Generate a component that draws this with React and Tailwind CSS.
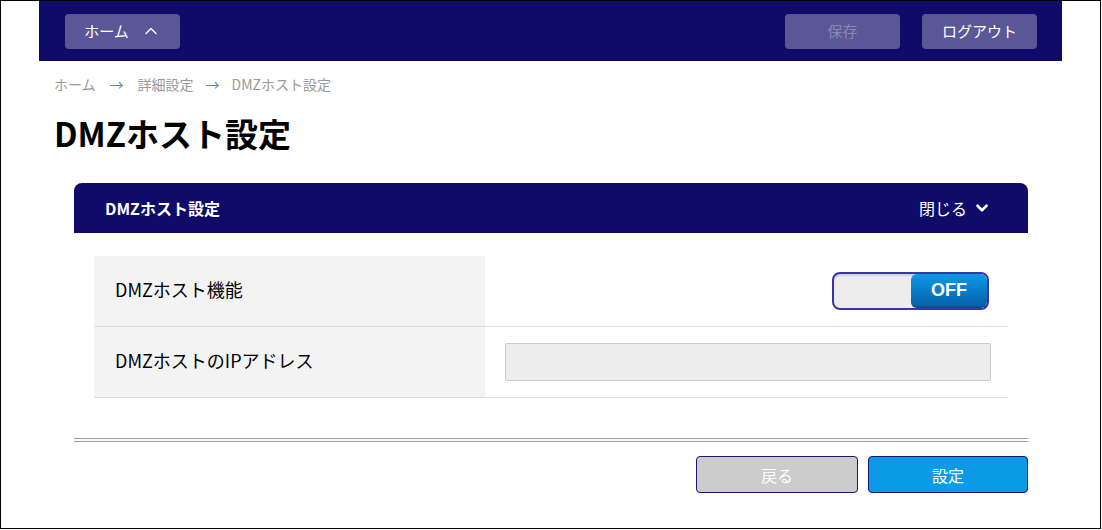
import { ChevronUp, ChevronDown } from 'lucide-react'

const FONT = { fontFamily: '"Noto Sans CJK JP", "Noto Sans", sans-serif' }

function Toggle() {
  return (
    <div className="mr-[2px] flex h-[38px] w-[157px] overflow-hidden rounded-[8px] border-2 border-[#3b35a3] bg-[#ededed] shadow-[inset_0_2px_2px_rgba(0,0,0,0.12)]">
      <div className="flex-1" />
      <div
        className="flex w-[76px] items-center justify-center rounded-[6px] border-b-2 border-[#0a4f8f] bg-gradient-to-b from-[#0a9be6] to-[#0760ac] text-[18px] font-bold text-white"
        style={{ fontFamily: '"Liberation Sans", Arial, sans-serif' }}
      >
        OFF
      </div>
    </div>
  )
}

export default function App() {
  return (
    <div className="h-[529px] w-[1101px] border border-black bg-white" style={FONT}>
      <div className="ml-[38px] w-[1023px]">
        <header className="flex h-[60px] items-center justify-between bg-[#0f0c69] pl-[26px] pr-[25px]">
          <button className="flex h-[35px] w-[115px] items-center justify-center gap-[12px] rounded-[4px] bg-[#5a5797] text-[15px] text-white">
            ホーム
            <ChevronUp size={20} strokeWidth={1.6} />
          </button>
          <div className="flex gap-[22px]">
            <button className="h-[35px] w-[115px] rounded-[4px] bg-[#5a5797] text-[15px] text-[#8a88b8]">
              保存
            </button>
            <button className="h-[35px] w-[115px] rounded-[4px] bg-[#5a5797] text-[15px] text-white">
              ログアウト
            </button>
          </div>
        </header>

        <nav className="mt-[13px] flex items-center pl-[15px] text-[14px] text-[#999]">
          <span>ホーム</span>
          <span className="mx-[14px] text-[#1a9be6]">→</span>
          <span>詳細設定</span>
          <span className="mx-[12px] text-[#1a9be6]">→</span>
          <span>DMZホスト設定</span>
        </nav>

        <h1 className="mt-[18px] pl-[15px] text-[33px] font-bold leading-[40px] text-black">
          DMZホスト設定
        </h1>

        <section className="ml-[35px] mr-[34px] mt-[30px]">
          <div className="flex h-[50px] items-center justify-between rounded-t-[8px] bg-[#0f0c69] pl-[31px] pr-[37px] text-white">
            <span className="text-[16px] font-bold">DMZホスト設定</span>
            <span className="flex items-center gap-[6px] text-[16px]">
              閉じる
              <ChevronDown size={18} strokeWidth={3.5} />
            </span>
          </div>

          <div className="mx-[20px] mt-[23px]">
            <div className="flex h-[71px] border-b border-[#ddd]">
              <div className="flex w-[391px] items-center bg-[#f3f3f3] pb-[4px] pl-[21px] text-[18px] text-black">
                DMZホスト機能
              </div>
              <div className="flex flex-1 items-center justify-end pr-[17px]">
                <Toggle />
              </div>
            </div>
            <div className="flex h-[71px] border-b border-[#ddd]">
              <div className="flex w-[391px] items-center bg-[#f3f3f3] pb-[4px] pl-[21px] text-[18px] text-black">
                DMZホストのIPアドレス
              </div>
              <div className="flex flex-1 items-center pl-[20px] pr-[17px]">
                <input
                  type="text"
                  disabled
                  className="h-[38px] w-full rounded-[2px] border border-[#ccc] bg-[#ededed]"
                />
              </div>
            </div>
          </div>

          <div className="mt-[40px] h-[4px] border-y border-[#9c9c9c]" />

          <div className="mt-[14px] flex justify-end gap-[10px]">
            <button className="h-[37px] w-[162px] rounded-[4px] border border-[#1a1677] bg-[#cccccc] text-[16px] text-white">
              戻る
            </button>
            <button className="h-[37px] w-[160px] rounded-[4px] border border-[#1a1677] bg-[#0a9ae6] text-[16px] text-white">
              設定
            </button>
          </div>
        </section>
      </div>
    </div>
  )
}
